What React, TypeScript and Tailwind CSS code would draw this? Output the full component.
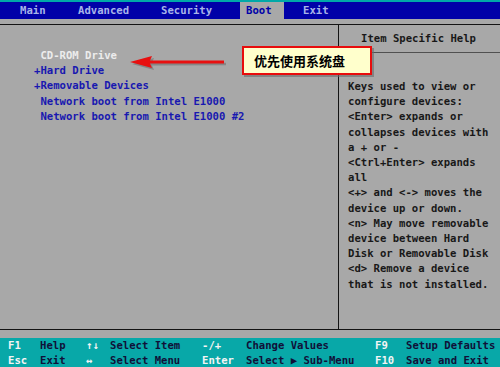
import React from "react";

const mono = { fontFamily: '"DejaVu Sans Mono", "Liberation Mono", monospace' };

function FooterRow({ cells }: { cells: [string, string, string, string, string, string, string, string] }) {
  const [k1, d1, k2, d2, k3, d3, k4, d4] = cells;
  return (
    <div className="flex h-[15px] items-center whitespace-pre">
      <span className="w-[40px] pl-[8px] text-[#f4f4f4]">{k1}</span>
      <span className="w-[46px] text-[#101038]">{d1}</span>
      <span className="w-[24px] text-[#f4f4f4]">{k2}</span>
      <span className="w-[92px] text-[#101038]">{d2}</span>
      <span className="w-[44px] text-[#f4f4f4]">{k3}</span>
      <span className="w-[129px] text-[#101038]">{d3}</span>
      <span className="w-[31px] text-[#f4f4f4]">{k4}</span>
      <span className="text-[#101038]">{d4}</span>
    </div>
  );
}

export default function App() {
  const help = [
    "Keys used to view or",
    "configure devices:",
    "<Enter> expands or",
    "collapses devices with",
    "a + or -",
    "<Ctrl+Enter> expands",
    "all",
    "<+> and <-> moves the",
    "device up or down.",
    "<n> May move removable",
    "device between Hard",
    "Disk or Removable Disk",
    "<d> Remove a device",
    "that is not installed.",
  ];
  return (
    <div className="relative w-[500px] h-[367px] overflow-hidden bg-[#a8a8a8] text-[10.6px] font-bold" style={mono}>
      {/* top menu bar */}
      <div className="h-[19px] border-t-[2px] border-[#00a8a8] bg-[#0000a8] flex items-end pl-[20px] text-[#a8b4e8] whitespace-pre">
        <span className="w-[58px] h-[17px] leading-[17px]">Main</span>
        <span className="w-[83px] h-[17px] leading-[17px]">Advanced</span>
        <span className="w-[79px] h-[17px] leading-[17px]">Security</span>
        <span className="w-[44px] h-[17px] leading-[17px] pl-[6px] bg-[#a8a8a8] text-[#0000a8]">Boot</span>
        <span className="ml-[19px] h-[17px] leading-[17px]">Exit</span>
      </div>

      {/* main area */}
      <div className="h-[319px] pt-[5px]">
        <div className="flex h-[306px] border-t border-b border-[#141414]">
          <div className="w-[339px] border-r border-[#141414] pt-[23px] pl-[34px] leading-[15.2px] whitespace-pre">
            <div className="text-[#ececec]"> CD-ROM Drive</div>
            <div className="text-[#1818b0]">+Hard Drive</div>
            <div className="text-[#1818b0]">+Removable Devices</div>
            <div className="text-[#1818b0]"> Network boot from Intel E1000</div>
            <div className="text-[#1818b0]"> Network boot from Intel E1000 #2</div>
          </div>
          <div className="flex-1 flex flex-col text-[#181818]">
            <div className="h-[28px] border-b border-[#505050] flex items-center justify-center pr-[2px]">
              Item Specific Help
            </div>
            <div className="pt-[26px] pl-[9px] leading-[15.2px] whitespace-pre">
              {help.map((l, i) => (
                <div key={i}>{l}</div>
              ))}
            </div>
          </div>
        </div>
      </div>

      {/* footer */}
      <div className="h-[29px] bg-[#08a8a8] flex flex-col justify-center pt-[1px]">
        <FooterRow cells={["F1", "Help", "↑↓", "Select Item", "-/+", "Change Values", "F9", "Setup Defaults"]} />
        <FooterRow cells={["Esc", "Exit", "↔", "Select Menu", "Enter", "Select ▶ Sub-Menu", "F10", "Save and Exit"]} />
      </div>

      {/* arrow */}
      <svg className="absolute left-[126px] top-[52px]" width="106" height="22" viewBox="0 0 106 22">
        <g transform="translate(2,2)" fill="#6a6a6a" opacity="0.55">
          <polygon points="4,10 26,4 24,8.5 98,8.8 98,11.2 24,11.5 26,16" />
        </g>
        <polygon points="4,10 26,4 24,8.5 98,8.6 98,11.4 24,11.5 26,16" fill="#e81010" />
      </svg>

      {/* callout */}
      <div className="absolute left-[244px] top-[48px] w-[130px] h-[29px] bg-[#6a6a6a] opacity-60" />
      <div
        className="absolute left-[242px] top-[46px] w-[130px] h-[29px] bg-[#ffffcc] border-[2px] border-[#e80c0c] flex items-center pl-[10px] text-[13px] font-bold text-black"
        style={{ fontFamily: '"Noto Sans CJK SC", sans-serif' }}
      >
        优先使用系统盘
      </div>
    </div>
  );
}
